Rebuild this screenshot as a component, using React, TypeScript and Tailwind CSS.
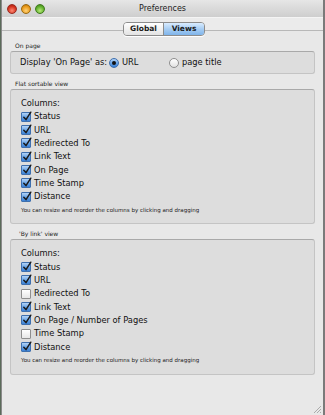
import type { ReactNode } from 'react'

const FONT = { fontFamily: '"DejaVu Sans", "Lucida Grande", sans-serif' }

function CheckBox({ on }: { on: boolean }) {
  if (!on) {
    return (
      <span className="w-[10px] h-[10px] shrink-0 rounded-[1px] border border-[#8e8e8e] bg-linear-to-b from-white to-[#e6e6e6]" />
    )
  }
  return (
    <span className="relative w-[10px] h-[10px] shrink-0 rounded-[1px] border border-[#3e6fae] bg-linear-to-b from-[#b3d3f6] via-[#6aa6e8] to-[#3a80d4]">
      <svg className="absolute -top-[2px] left-0" width="10" height="11" viewBox="0 0 10 11">
        <path d="M1.8 6.2 L4 8.6 L8.8 1.2" fill="none" stroke="#1a1a1a" strokeWidth="1.5" strokeLinecap="round" strokeLinejoin="round" />
      </svg>
    </span>
  )
}

function Radio({ on }: { on: boolean }) {
  return on ? (
    <span className="w-[10px] h-[10px] shrink-0 rounded-full border border-[#3e6fae] bg-linear-to-b from-[#b3d3f6] via-[#6aa6e8] to-[#3a80d4] flex items-center justify-center">
      <span className="w-[4px] h-[4px] rounded-full bg-[#111]" />
    </span>
  ) : (
    <span className="w-[10px] h-[10px] shrink-0 rounded-full border border-[#8e8e8e] bg-linear-to-b from-white to-[#e2e2e2]" />
  )
}

function Group({ label, indent, children }: { label: string; indent?: boolean; children: ReactNode }) {
  return (
    <div className="flex flex-col">
      <div className={`h-[12px] flex items-center text-[6px] text-[#222] ${indent ? 'pl-[17px]' : 'pl-[13px]'}`}>{label}</div>
      <div className="mx-[8px] rounded-[3px] border border-[#c4c4c4] border-t-[#a9a9a9] bg-[#dddddd]">
        {children}
      </div>
    </div>
  )
}

function Columns({ items }: { items: [string, boolean][] }) {
  return (
    <div className="pl-[10px] pt-[6px] pb-[6px] flex flex-col">
      <div className="h-[14px] flex items-center text-[8.3px] text-[#111]">Columns:</div>
      {items.map(([name, on]) => (
        <div key={name} className="h-[13.33px] flex items-center gap-[3px] text-[8.3px] text-[#111]">
          <CheckBox on={on} />
          <span>{name}</span>
        </div>
      ))}
      <div className="h-[14px] flex items-center text-[5.5px] text-[#222]">
        You can resize and reorder the columns by clicking and dragging
      </div>
    </div>
  )
}

export default function App() {
  return (
    <div style={FONT} className="w-[325px] h-[415px] bg-[#5b6b5a] flex">
      <div className="w-[322px] h-[415px] ml-px bg-[#e8e8e8] border-l border-[#8a8a8a] flex flex-col relative">
        {/* Title bar */}
        <div className="h-[17px] flex items-center bg-linear-to-b from-[#e6e6e6] to-[#cecece] relative">
          <div className="flex items-center gap-[4px] pl-[5px]">
            <span className="w-[10px] h-[10px] rounded-full border border-[#9a2a20] bg-[radial-gradient(circle_at_50%_70%,#ff8a75,#d3321d_60%,#9e1d12)]" />
            <span className="w-[10px] h-[10px] rounded-full border border-[#9a6a10] bg-[radial-gradient(circle_at_50%_70%,#ffd37a,#e99a1a_60%,#a8650b)]" />
            <span className="w-[10px] h-[10px] rounded-full border border-[#3f7a1c] bg-[radial-gradient(circle_at_50%_70%,#b7ea7a,#5fae2b_60%,#3b7a14)]" />
          </div>
          <span className="absolute inset-x-0 text-center text-[8px] text-[#222]">Preferences</span>
        </div>
        {/* Toolbar */}
        <div className="h-[14px] bg-[#ebebeb] border-t border-[#f4f4f4] border-b border-b-[#b8b8b8]" />
        <div className="flex justify-center -mt-[9px] pl-[3px]">
          <div className="flex h-[14px] rounded-[4px] border border-[#8c8c8c] overflow-hidden text-[7.5px] font-bold text-[#1a1a1a] shadow-[0_1px_0_#fff]">
            <div className="w-[40px] flex items-center justify-center bg-linear-to-b from-white to-[#e3e3e3] border-r border-[#8c8c8c]">Global</div>
            <div className="w-[40px] flex items-center justify-center bg-linear-to-b from-[#d9ecff] via-[#a7cdf3] to-[#7fb4ea]">Views</div>
          </div>
        </div>

        <div className="mt-[3px] flex flex-col">
          <Group label="On page">
            <div className="h-[21px] flex items-center pl-[9px] text-[8.3px] text-[#111]">
              <span className="w-[89px]">Display 'On Page' as:</span>
              <Radio on />
              <span className="ml-[3px] w-[47px]">URL</span>
              <Radio on={false} />
              <span className="ml-[3px]">page title</span>
            </div>
          </Group>
          <div className="h-[3px]" />
          <Group label="Flat sortable view">
            <Columns
              items={[
                ['Status', true],
                ['URL', true],
                ['Redirected To', true],
                ['Link Text', true],
                ['On Page', true],
                ['Time Stamp', true],
                ['Distance', true],
              ]}
            />
          </Group>
          <div className="h-[3px]" />
          <Group label="'By link' view" indent>
            <Columns
              items={[
                ['Status', true],
                ['URL', true],
                ['Redirected To', false],
                ['Link Text', true],
                ['On Page / Number of Pages', true],
                ['Time Stamp', false],
                ['Distance', true],
              ]}
            />
          </Group>
        </div>

        {/* resize grip */}
        <svg className="absolute right-[1px] bottom-[1px]" width="10" height="10" viewBox="0 0 10 10">
          <path d="M9 2 L2 9 M9 5 L5 9 M9 8 L8 9" stroke="#9a9a9a" strokeWidth="0.8" />
        </svg>
      </div>
      <div className="w-[2px] h-[415px] bg-[#7a7a7a]" />
    </div>
  )
}
